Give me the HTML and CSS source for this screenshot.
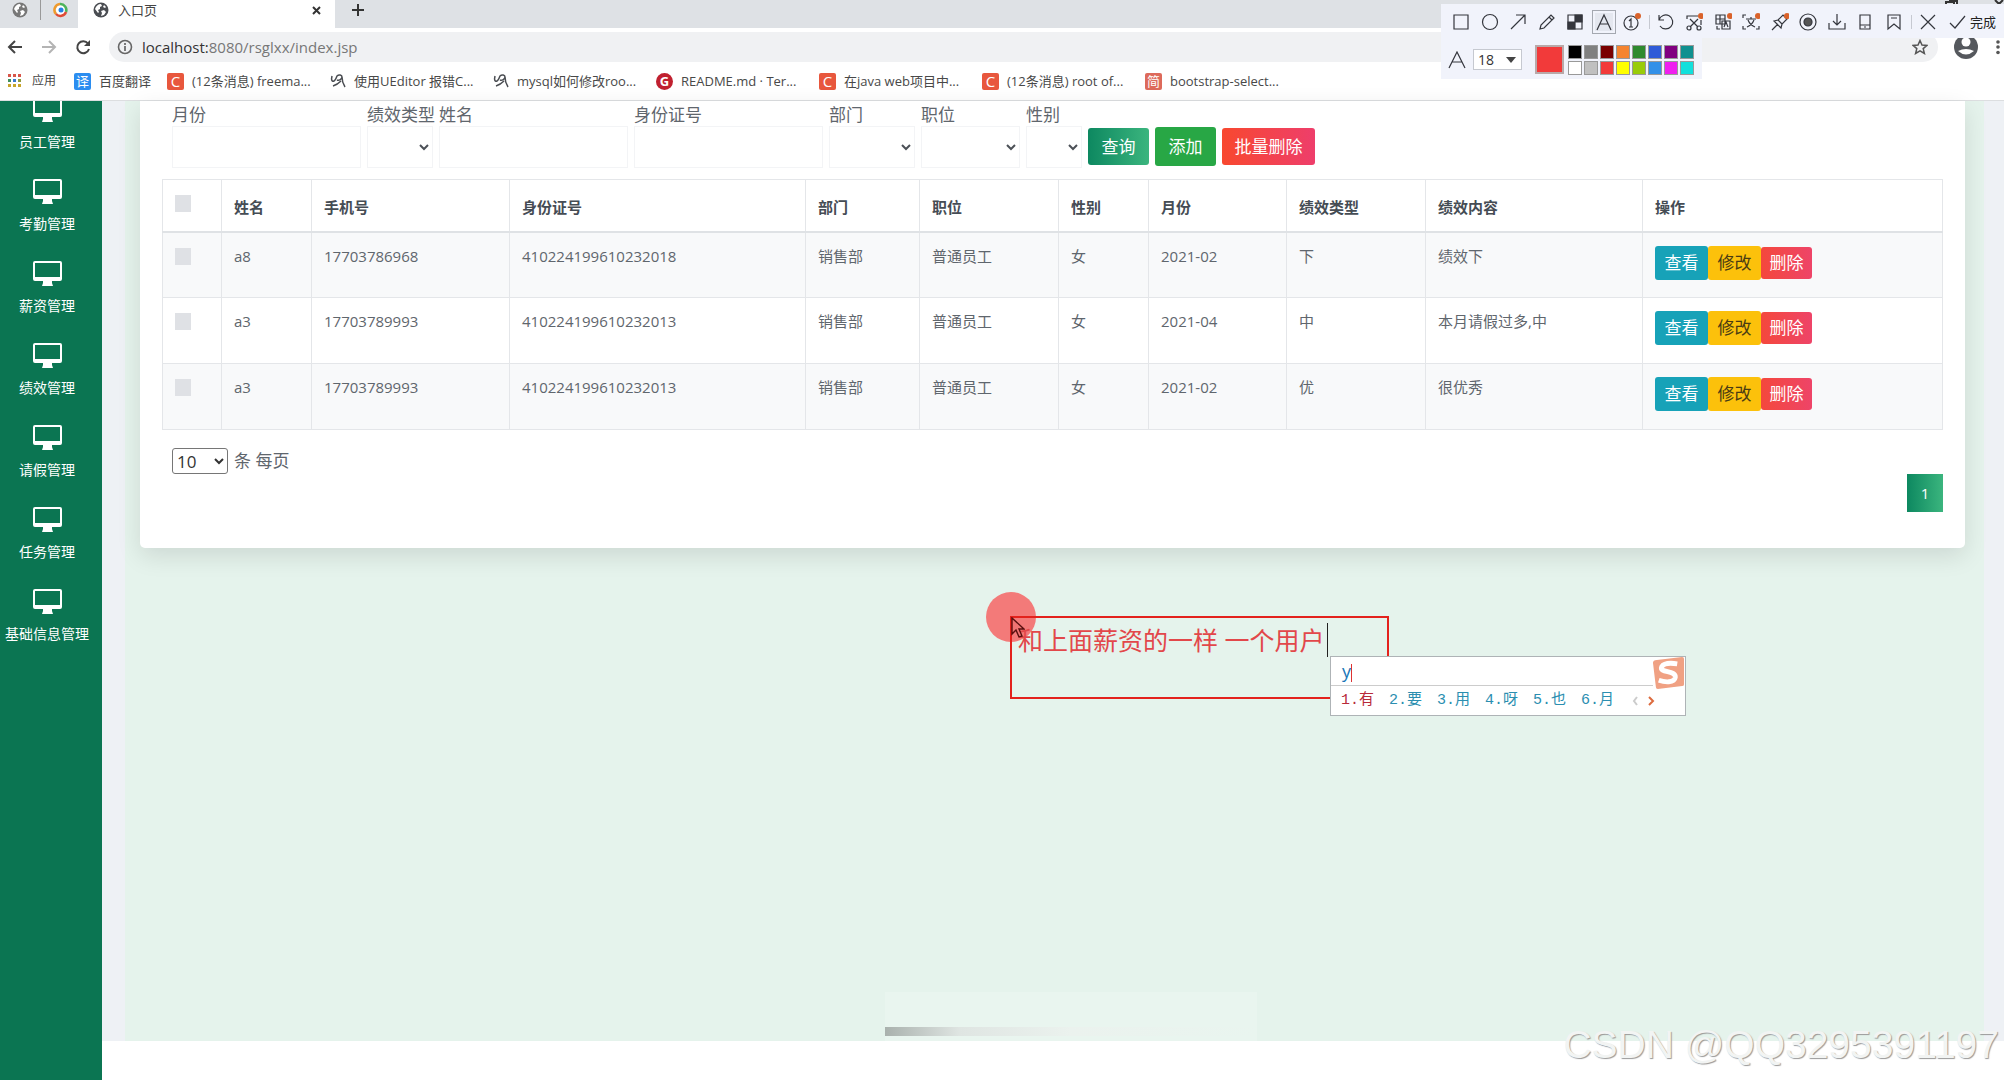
FILE: index.html
```html
<!DOCTYPE html>
<html lang="zh-CN">
<head>
<meta charset="utf-8">
<title>入口页</title>
<link rel="stylesheet" href="styles.css">
</head>
<body>
<svg class="defs" aria-hidden="true">
  <symbol id="monitor" viewBox="0 0 29 25"><path fill="currentColor" fill-rule="evenodd" d="M2 0h25a2 2 0 0 1 2 2v16a2 2 0 0 1-2 2h-8v2l1 3H9l1-3v-2H2a2 2 0 0 1-2-2V2a2 2 0 0 1 2-2zm0 2v14h25V2z"/></symbol>
  <symbol id="globe" viewBox="0 0 16 16"><circle cx="8" cy="8" r="7.5" fill="currentColor"/><path fill="#fff" d="M2 7c1-3 3-5 6-5l1 2-2 1v2l-2 1 1 2-1 1zM8 9l3-1 2 2-2 3-3 1 1-3zM11 3l2 2-1 1-2-1z"/></symbol>
  <symbol id="swirl" viewBox="0 0 16 16"><path fill="none" stroke="currentColor" stroke-width="1.5" d="M2 3c-1 4 0 6 2 5s2-3 3-5c2-2 5-1 5 1s-3 4-5 3M12 4c0 4 1 7 3 10M11 8c-2 2-5 4-8 5"/></symbol>
</svg>

<header class="browser">
  <div class="tabs">
    <div class="pinned"><svg class="i16 dim"><use href="#globe"/></svg><span class="bar"></span>
      <svg class="i16" viewBox="0 0 16 16"><circle cx="8" cy="8" r="5" fill="#fff"/><g fill="none" stroke-width="2.500"><path stroke="#ef9b2d" d="M3 12A6 6 0 0 1 7 2"/><path stroke="#4db35a" d="M7 2a6 6 0 0 1 6 8"/><path stroke="#df4b36" d="M13 10a6 6 0 0 1-10 2"/></g><circle cx="8" cy="8" r="2.500" fill="#2481e5"/></svg></div>
    <div class="tab"><svg class="i16"><use href="#globe"/></svg><span class="tabname">入口页</span>
      <button class="plain" aria-label="关闭"><svg width="9" height="9" viewBox="0 0 9 9"><path d="M1 1l7 7M8 1L1 8" stroke="#333" stroke-width="2"/></svg></button></div>
    <button class="plain" aria-label="新标签页"><svg width="14" height="14" viewBox="0 0 14 14"><path d="M7 1v12M1 7h12" stroke="#333" stroke-width="2"/></svg></button>
    <span class="winbits"><svg width="60" height="5" viewBox="0 0 60 5"><path d="M2 4V2h8v2M5 1h8v3M51 0l4 4 4-4" fill="none" stroke="#333" stroke-width="2"/></svg></span>
  </div>
  <div class="nav">
    <button class="plain" aria-label="后退"><svg width="16" height="16" viewBox="0 0 16 16"><path d="M15 8H2M8 2L2 8l6 6" fill="none" stroke="#444" stroke-width="2"/></svg></button>
    <button class="plain" aria-label="前进"><svg width="16" height="16" viewBox="0 0 16 16"><path d="M1 8h13M8 2l6 6-6 6" fill="none" stroke="#b4b4b4" stroke-width="2"/></svg></button>
    <button class="plain" aria-label="刷新"><svg width="16" height="16" viewBox="0 0 16 16"><path d="M13 4.5A6 6 0 1 0 14 10" fill="none" stroke="#444" stroke-width="2"/><path d="M15 1v6H9z" fill="#444"/></svg></button>
    <div class="omni">
      <svg class="i16" viewBox="0 0 16 16"><circle cx="8" cy="8" r="6.5" fill="none" stroke="#666" stroke-width="1.6"/><path d="M8 7v5M8 4v2" stroke="#666" stroke-width="1.7"/></svg>
      <span class="url"><b>localhost:</b>8080/rsglxx/index.jsp</span>
      <svg class="star" width="16" height="16" viewBox="0 0 16 16"><path d="M8 1.5l2 4.5 5 .4-3.800 3.200 1.200 4.900L8 11.900l-4.400 2.600 1.200-4.900L1 6.400 6 6z" fill="none" stroke="#555" stroke-width="1.500"/></svg>
    </div>
    <svg width="24" height="24" viewBox="0 0 24 24"><circle cx="12" cy="12" r="12" fill="#55585d"/><circle cx="12" cy="7" r="4.500" fill="#fff"/><path d="M4 16q8-4 16 0-8 7-16 0z" fill="#fff"/></svg>
    <svg width="4" height="16" viewBox="0 0 4 16" fill="#555"><circle cx="2" cy="3" r="1.800"/><circle cx="2" cy="8" r="1.800"/><circle cx="2" cy="13.500" r="1.800"/></svg>
  </div>
  <nav class="marks">
    <a class="apps" href="#"><svg width="14" height="14" viewBox="0 0 14 14"><path fill="#d8564a" d="M0 0h3v3H0zM5 0h3v3H5zM10 0h3v3h-3z"/><path fill="#3d8f5d" d="M0 5h3v3H0z"/><path fill="#3c7bd0" d="M5 5h3v3H5z"/><path fill="#8f9a3d" d="M10 5h3v3h-3z"/><path fill="#c7a52b" d="M0 10h3v3H0zM5 10h3v3H5zM10 10h3v3h-3z"/></svg>应用</a>
    <a class="trans" href="#"><i class="fav blue">译</i>百度翻译</a>
    <a href="#"><i class="fav red">C</i>(12条消息) freema...</a>
    <a href="#"><svg class="i16"><use href="#swirl"/></svg>使用UEditor 报错C...</a>
    <a href="#"><svg class="i16"><use href="#swirl"/></svg>mysql如何修改roo...</a>
    <a href="#"><i class="fav gitee">G</i>README.md · Ter...</a>
    <a href="#"><i class="fav red">C</i>在java web项目中...</a>
    <a href="#"><i class="fav red">C</i>(12条消息) root of...</a>
    <a href="#"><i class="fav jian">简</i>bootstrap-select...</a>
  </nav>
</header>

<div class="app">
  <aside class="side">
    <nav class="menu">
      <a href="#"><svg><use href="#monitor"/></svg>员工管理</a>
      <a href="#"><svg><use href="#monitor"/></svg>考勤管理</a>
      <a href="#"><svg><use href="#monitor"/></svg>薪资管理</a>
      <a href="#"><svg><use href="#monitor"/></svg>绩效管理</a>
      <a href="#"><svg><use href="#monitor"/></svg>请假管理</a>
      <a href="#"><svg><use href="#monitor"/></svg>任务管理</a>
      <a href="#"><svg><use href="#monitor"/></svg>基础信息管理</a>
    </nav>
  </aside>
  <div class="work">
    <div class="gutter">
      <main class="area">
        <section class="card">
          <form class="search">
            <div class="field wide"><label for="f1">月份</label><input id="f1" type="text"></div>
            <div class="field s1"><label for="f2">绩效类型</label><select id="f2"><option></option></select></div>
            <div class="field wide"><label for="f3">姓名</label><input id="f3" type="text"></div>
            <div class="field wide"><label for="f4">身份证号</label><input id="f4" type="text"></div>
            <div class="field s2"><label for="f5">部门</label><select id="f5"><option></option></select></div>
            <div class="field s3"><label for="f6">职位</label><select id="f6"><option></option></select></div>
            <div class="field s4"><label for="f7">性别</label><select id="f7"><option></option></select></div>
            <div class="acts">
              <button type="button" class="btn grad">查询</button>
              <button type="button" class="btn add">添加</button>
              <button type="button" class="btn del">批量删除</button>
            </div>
          </form>
          <table>
            <colgroup><col class="c1"><col class="c2"><col class="c3"><col class="c4"><col class="c5"><col class="c6"><col class="c7"><col class="c8"><col class="c9"><col class="c10"><col></colgroup>
            <thead><tr><th><input type="checkbox" aria-label="全选"></th><th>姓名</th><th>手机号</th><th>身份证号</th><th>部门</th><th>职位</th><th>性别</th><th>月份</th><th>绩效类型</th><th>绩效内容</th><th>操作</th></tr></thead>
            <tbody>
              <tr><td><input type="checkbox" aria-label="选择"></td><td>a8</td><td>17703786968</td><td>410224199610232018</td><td>销售部</td><td>普通员工</td><td>女</td><td>2021-02</td><td>下</td><td>绩效下</td><td><div class="ops"><button class="op view">查看</button><button class="op edit">修改</button><button class="op rm">删除</button></div></td></tr>
              <tr><td><input type="checkbox" aria-label="选择"></td><td>a3</td><td>17703789993</td><td>410224199610232013</td><td>销售部</td><td>普通员工</td><td>女</td><td>2021-04</td><td>中</td><td>本月请假过多,中</td><td><div class="ops"><button class="op view">查看</button><button class="op edit">修改</button><button class="op rm">删除</button></div></td></tr>
              <tr><td><input type="checkbox" aria-label="选择"></td><td>a3</td><td>17703789993</td><td>410224199610232013</td><td>销售部</td><td>普通员工</td><td>女</td><td>2021-02</td><td>优</td><td>很优秀</td><td><div class="ops"><button class="op view">查看</button><button class="op edit">修改</button><button class="op rm">删除</button></div></td></tr>
            </tbody>
          </table>
          <div class="size"><select id="size"><option>10</option></select><label for="size">条 每页</label></div>
          <div class="pager"><button class="page">1</button></div>
        </section>
      </main>
    </div>
    <div class="foot"></div>
  </div>
</div>

<div class="shot">
  <div class="tools">
    <div class="set seta">
      <svg viewBox="0 0 18 18"><path d="M2 2h14v14H2z"/></svg>
      <svg viewBox="0 0 18 18"><circle cx="9" cy="9" r="7.500"/></svg>
      <svg viewBox="0 0 18 18"><path d="M2 16L16 2M7 2h9v9"/></svg>
      <svg viewBox="0 0 18 18"><path d="M2 16l1-4L13 2l3 3L6 15zM11 4l3 3"/></svg>
      <svg viewBox="0 0 18 18"><path d="M2 2h14v14H2z"/><path d="M9 2h7v7H9zM2 9h7v7H2z" fill="#34363d"/></svg>
      <svg class="on" viewBox="0 0 18 18"><path d="M2 17L9 2l7 15M5 11h8"/></svg>
      <svg viewBox="0 0 18 18"><circle cx="8" cy="10" r="7"/><path d="M6 8l2-2v8M6 14h4"/><circle class="dot" cx="15" cy="3" r="3"/></svg>
    </div>
    <i class="sep"></i>
    <div class="set setb">
      <svg viewBox="0 0 18 18"><path d="M2 2v5h5M2 7a7 7 0 1 1 1 6"/></svg>
      <svg viewBox="0 0 18 18"><path d="M2 6V3h11M5 6l8 8M13 6l-8 8M16 7v5"/><circle cx="4" cy="15" r="2"/><circle cx="14" cy="15" r="2"/><circle class="dot" cx="16" cy="3" r="3"/></svg>
      <svg viewBox="0 0 18 18"><path d="M2 2h9v9H2zM2 6h9M6 2v9M8 8h8v8H8zM10 14l2-5 2 5M3 13v3h3"/><circle class="dot" cx="16" cy="3" r="3"/></svg>
      <svg viewBox="0 0 18 18"><path d="M1 5V2h3M1 13v3h3M17 13v3h-3M4 6h10M9 4v2M6 7q2 5 7 7M12 7q-2 5-7 7"/><circle class="dot" cx="16" cy="3" r="3"/></svg>
      <svg viewBox="0 0 18 18"><path d="M1 17l6-6M3 8l7 7 1-4 5-5-4-4-5 5zM7 7l4 4"/><circle class="dot" cx="16" cy="3" r="3"/></svg>
      <svg viewBox="0 0 18 18"><circle cx="9" cy="9" r="8"/><circle cx="9" cy="9" r="4" fill="#555"/></svg>
      <svg viewBox="0 0 18 18"><path d="M1 10v6h16v-6M9 1v11M5 8l4 4 4-4"/></svg>
      <svg viewBox="0 0 18 18"><path d="M4 2h10v14H4zM4 12h10M8 14h2"/></svg>
      <svg viewBox="0 0 18 18"><path d="M3 2h12v14l-6-5-6 5zM6 5h6"/></svg>
    </div>
    <i class="sep"></i>
    <svg viewBox="0 0 18 18"><path d="M2 2l14 14M16 2L2 16"/></svg>
    <button class="plain done"><svg viewBox="0 0 18 18"><path d="M2 10l5 5L17 3"/></svg>完成</button>
  </div>
  <div class="style">
    <svg viewBox="0 0 18 18"><path d="M1 17L9 1l8 16M4 11h10"/></svg>
    <button class="fs">18<svg width="10" height="6" viewBox="0 0 10 6"><path d="M0 0h10L5 6z"/></svg></button>
    <span class="cur"></span>
    <div class="pal"><i class="p1"></i><i class="p2"></i><i class="p3"></i><i class="p4"></i><i class="p5"></i><i class="p6"></i><i class="p7"></i><i class="p8"></i><i class="p9"></i><i class="p10"></i><i class="p11"></i><i class="p12"></i><i class="p13"></i><i class="p14"></i><i class="p15"></i><i class="p16"></i></div>
  </div>
</div>

<div class="halo"></div>
<div class="note"><span>和上面薪资的一样 一个用户</span></div>
<svg class="cursor" viewBox="0 0 14 21"><path d="M1 1v16l4-4 3 7 3-1-3-7h5z" fill="#e8606033" stroke="#5a1010" stroke-width="1.400"/></svg>
<div class="ime">
  <div class="typed">y</div>
  <div class="cands"><span class="hot">1.有</span><span>2.要</span><span>3.用</span><span>4.呀</span><span>5.也</span><span>6.月</span><svg width="26" height="10" viewBox="0 0 26 10" fill="none" stroke-width="2"><path d="M8 1L5 5l3 4" stroke="#ccc"/><path d="M20 1l4 4-4 4" stroke="#dd6b3e"/></svg></div>
  <svg class="sogou" viewBox="0 0 34 34"><path d="M5 3L31 0q2 0 2 2v26q0 2-2 2L6 33q-2 0-2-2L1 6q0-3 4-3z" fill="#f0a183"/><path d="M26 7Q13 5 10 10c-3 7 15 3 14 11-1 6-11 5-17 3" fill="none" stroke="#fff" stroke-width="5"/></svg>
</div>
<div class="smudge"></div>
<div class="mark">CSDN @QQ3295391197</div>
</body>
</html>
```
FILE: styles.css
```css
* { box-sizing: border-box; }
body { margin: 0; min-height: 100vh; display: flex; flex-direction: column; position: relative; overflow: hidden; background: #fff; font: 15px/20px "Open Sans", "Noto Sans CJK SC", sans-serif; color: #5f666d; }
a { color: inherit; text-decoration: none; }
button, input, select { font: inherit; margin: 0; }
svg { flex: none; display: block; }
.defs { position: absolute; width: 0; height: 0; }
.i16 { width: 16px; height: 16px; color: #4a4d52; }
.plain { border: 0; padding: 0; background: none; display: flex; align-items: center; color: #222; }

/* browser chrome */
.browser { background: #fff; border-bottom: 1px solid #dcdee0; }
.tabs { height: 28px; background: #dee1e5; display: flex; align-items: stretch; gap: 16px; padding-bottom: 8px; }
.pinned { display: flex; align-items: center; gap: 12px; padding-left: 12px; width: 62px; }
.pinned .dim { color: #777; }
.bar { flex: none; width: 1px; height: 20px; background: #999; }
.tab { width: 257px; height: 28px; background: #fff; display: flex; align-items: center; gap: 9px; padding: 0 14px 8px 15px; font-size: 13px; color: #444; }
.tabname { flex: 1; }
.winbits { margin-left: auto; }
.nav { height: 38px; padding: 0 4px 0 7px; display: flex; align-items: center; gap: 18px; }
.omni { flex: 1; height: 30px; border-radius: 15px; background: #f0f1f3; display: flex; align-items: center; gap: 9px; padding: 0 10px 0 8px; margin-right: -2px; font-size: 15px; color: #777; }
.url { flex: 1; }
.url b { font-weight: 400; color: #333; }
.marks { height: 34px; padding: 0 0 4px 8px; display: flex; align-items: center; font-size: 13px; color: #484848; }
.marks a { width: 163px; display: flex; align-items: center; gap: 8px; white-space: nowrap; }
.marks .apps { width: 66px; gap: 10px; font-size: 12px; }
.marks .trans { width: 93px; }
.fav { width: 17px; height: 17px; border-radius: 2px; color: #fff; font-size: 13px; line-height: 17px; text-align: center; font-style: normal; }
.blue { background: #2b8df0; }
.red { background: #e8573d; font-size: 15px; }
.gitee { background: #c0202f; border-radius: 50%; font-weight: 700; }
.jian { background: #dd6a5b; }

/* application */
.app { flex: 1; display: flex; }
.side { width: 102px; background: #0b7552; overflow: hidden; }
.menu { margin-top: -4px; padding-right: 8px; }
.menu a { height: 82px; display: flex; flex-direction: column; align-items: center; gap: 9px; font-size: 14px; line-height: 22px; color: #fff; white-space: nowrap; }
.menu svg { width: 29px; height: 25px; }
.work { flex: 1; min-width: 0; display: flex; flex-direction: column; }
.gutter { flex: 1; display: flex; background: #eef1f5; padding: 0 20px 0 23px; }
.area { flex: 1; min-width: 0; background: #e5f3ec; padding: 0 19px 0 15px; }
.foot { height: 39px; background: #fff; }
.card { background: #fff; border-radius: 0 0 5px 5px; box-shadow: 0 8px 24px #0000001c; padding: 0 22px 36px 22px; }
.search { display: flex; align-items: flex-start; gap: 6px; padding: 3px 0 11px 10px; font-size: 17px; }
.field { display: flex; flex-direction: column; }
.field label { line-height: 22px; white-space: nowrap; }
.field input, .field select { width: 100%; height: 42px; border: 1px solid #f3f4f6; background: #fff; color: #4c5157; }
.field select { padding-right: 2px; }
.wide { width: 189px; }
.s1 { width: 66px; }
.s2 { width: 86px; }
.s3 { width: 99px; }
.s4 { width: 56px; }
.acts { display: flex; align-items: center; gap: 6px; padding-top: 23px; }
.btn { border: 0; border-radius: 3px; color: #fff; height: 37px; padding: 0; width: 61px; }
.grad { background: linear-gradient(90deg, #0d8860, #3bb57e); }
.add { background: #28a745; height: 39px; }
.del { width: 93px; background: linear-gradient(90deg, #f8482f, #ee3e6b); }
table { width: 100%; table-layout: fixed; border-collapse: collapse; }
.c1 { width: 59px; } .c2 { width: 90px; } .c3 { width: 198px; } .c4 { width: 296px; } .c5 { width: 114px; } .c6 { width: 139px; } .c7 { width: 90px; } .c8 { width: 138px; } .c9 { width: 139px; } .c10 { width: 217px; }
th, td { border: 1px solid #e4e6e9; text-align: left; vertical-align: top; padding: 13px 12px; }
th { height: 52px; padding: 17px 12px 12px; border-bottom: 2px solid #dfe2e5; font-weight: 600; color: #454c54; }
th:first-child { padding-top: 15px; }
td { height: 66px; }
tbody tr:nth-child(odd) { background: #f8f9fa; }
td input, th input { appearance: none; display: block; width: 16px; height: 17px; background: #dfe1e5; }
td input { margin-top: 2px; }
.ops { display: flex; align-items: center; height: 34px; }
.op { border: 0; padding: 0; border-radius: 3px; font-size: 17px; color: #fff; width: 53px; height: 34px; }
.view { background: #17a2b8; }
.edit { background: #fcc10b; color: #4a3c14; }
.rm { width: 51px; height: 32px; background: linear-gradient(90deg, #f4483c, #ee4468); }
.size { display: flex; align-items: center; gap: 6px; padding: 18px 0 0 10px; font-size: 17px; }
.size select { width: 56px; height: 26px; border: 1px solid #767676; border-radius: 3px; background: #fff; color: #333; }
.pager { display: flex; justify-content: flex-end; }
.page { border: 0; width: 36px; height: 38px; color: #fff; background: linear-gradient(90deg, #0d8860, #3bb57e); }

/* screenshot tool floating over the window */
.shot { position: absolute; top: 4px; right: 0; width: 563px; }
.shot svg { width: 18px; height: 18px; fill: none; stroke: #34363d; stroke-width: 1.200; }
.shot .dot { fill: #d9622b; stroke: none; }
.tools { height: 34px; background: #f1f3fb; display: flex; align-items: center; padding: 2px 8px 0 11px; }
.set { display: flex; justify-content: space-between; }
.seta { width: 189px; margin-right: 8px; }
.setb { width: 246px; margin: 0 8px 0 7px; }
.sep { width: 1px; height: 14px; background: #c6c9d1; }
.sep + svg { margin: 0 11px 0 7px; }
.on { outline: 1px solid #a4a8b0; outline-offset: 2px; background: #e4e7ef; }
.done { gap: 4px; font-size: 13px; white-space: nowrap; }
.style { width: 261px; height: 41px; background: #f1f3fb; display: flex; align-items: center; padding: 2px 8px 0 7px; }
.fs { width: 49px; height: 21px; margin: 0 13px 0 7px; padding: 0 5px 0 4px; border: 1px solid #c6c9d0; background: #fff; display: flex; align-items: center; justify-content: space-between; font-size: 14px; line-height: 18px; color: #333; }
.shot .fs svg { width: 10px; height: 6px; fill: #444; stroke: none; }
.cur { width: 29px; height: 29px; border: 2px solid #b9a9a9; background: #f23a3a; margin-right: 4px; }
.pal { display: grid; grid-template-columns: repeat(8, 14px); gap: 2px; }
.pal i { height: 14px; border: 1px solid #999; }
.p1 { background: #000; } .p2 { background: #808080; } .p3 { background: #7a0000; } .p4 { background: #f5842f; } .p5 { background: #2f8a2f; } .p6 { background: #2f5bd8; } .p7 { background: #800080; } .p8 { background: #109090; }
.p9 { background: #fff; } .p10 { background: #c0c0c0; } .p11 { background: #f23a3a; } .p12 { background: #ff0; } .p13 { background: #99cc0a; } .p14 { background: #3390e8; } .p15 { background: #ef1fef; } .p16 { background: #12e0dc; }

/* annotation and input method */
.halo { position: absolute; left: 986px; top: 592px; width: 50px; height: 50px; border-radius: 50%; background: #f37a79; }
.note { position: absolute; left: 1010px; top: 616px; width: 379px; height: 83px; border: 2px solid #e3211c; padding: 5px 0 0 6px; font-size: 25px; line-height: 34px; color: #e2474a; white-space: nowrap; }
.note span { display: inline-block; padding-right: 2px; border-right: 1px solid #222; }
.cursor { position: absolute; left: 1011px; top: 617px; width: 14px; height: 21px; }
.ime { position: absolute; left: 1330px; top: 656px; width: 356px; height: 60px; background: #fff; border: 1px solid #aeb3b6; }
.typed { height: 29px; margin-right: 32px; padding: 3px 0 0 11px; border-bottom: 1px solid #ccc; color: #1a76b8; font-size: 18px; line-height: 22px; }
.typed::after { content: ""; display: inline-block; height: 18px; border-left: 1px solid #d33; vertical-align: middle; }
.cands { display: flex; align-items: center; padding: 1px 0 0 10px; height: 29px; font-family: "Liberation Mono", "Noto Sans CJK SC", monospace; color: #2b8eb0; }
.cands span { width: 48px; }
.cands .hot { color: #b82a3a; }
.sogou { position: absolute; right: 0; top: 0; width: 33px; height: 33px; }
.smudge { position: absolute; left: 885px; top: 992px; width: 372px; height: 80px; background: linear-gradient(90deg, #a9b1ad, #dfe5e2 20%, #ebf2ee 50%, #ebf4ef00) 0 35px / 100% 9px no-repeat, #ffffff2e; }
.mark { position: absolute; right: 5px; bottom: 13px; font: 39px/44px "Liberation Sans", sans-serif; color: #f2f4f3; text-shadow: 1px 1px 1px #999; white-space: nowrap; }
```
